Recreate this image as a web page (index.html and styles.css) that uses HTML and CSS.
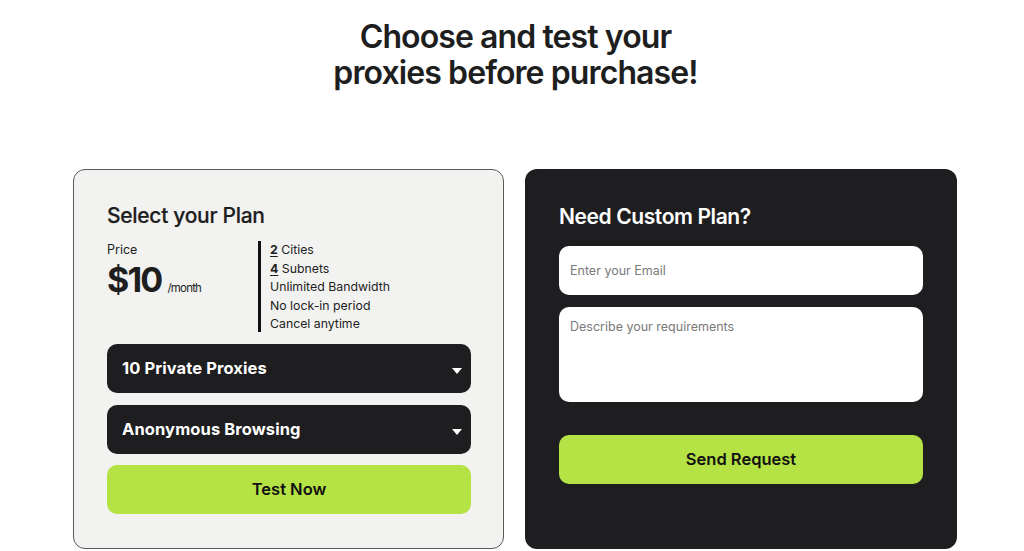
FILE: index.html
```html
<!DOCTYPE html>
<html>
<head>
<meta charset="utf-8">
<link rel="stylesheet" href="styles.css">
</head>
<body>
<h1 class="headline">Choose and test your<br>proxies before purchase!</h1>
<div class="cards">
  <section class="card card-light">
    <h2 class="card-title">Select your Plan</h2>
    <div class="plan-info">
      <div class="price-block">
        <div class="price-label">Price</div>
        <div class="price-row"><span class="price">$10</span><span class="per">/month</span></div>
      </div>
      <ul class="features">
        <li><u class="num">2</u> Cities</li>
        <li><u class="num">4</u> Subnets</li>
        <li>Unlimited Bandwidth</li>
        <li>No lock-in period</li>
        <li>Cancel anytime</li>
      </ul>
    </div>
    <div class="select"><span>10 Private Proxies</span><span class="caret"></span></div>
    <div class="select"><span>Anonymous Browsing</span><span class="caret"></span></div>
    <button class="btn btn-test">Test Now</button>
  </section>
  <section class="card card-dark">
    <h2 class="card-title title-light">Need Custom Plan?</h2>
    <div class="input">Enter your Email</div>
    <div class="input textarea">Describe your requirements</div>
    <button class="btn btn-send">Send Request</button>
  </section>
</div>
</body>
</html>
```
FILE: styles.css
```css
* { box-sizing: border-box; }
html, body { margin: 0; padding: 0; background: #ffffff; }
body {
  font-family: Inter, "Noto Sans", sans-serif;
  color: #1e1e1e;
  width: 1024px;
  height: 551px;
  overflow: hidden;
}
.headline {
  margin: 19px 0 0;
  padding-left: 7px;
  text-align: center;
  font-size: 32px;
  line-height: 36px;
  font-weight: 600;
  letter-spacing: -0.9px;
  color: #1e1e1e;
}
.cards {
  display: flex;
  gap: 21px;
  margin: 78px 0 0 73px;
}
.card {
  width: 432px;
  height: 380px;
  border-radius: 12px;
  padding: 33px 34px 0 34px;
  display: flex;
  flex-direction: column;
}
.card-light {
  width: 431px;
  background: #f2f2f0;
  border: 1px solid #5a5a5a;
  padding: 32px 32px 0 33px;
}
.card-dark {
  background: #1e1e20;
  padding-top: 34px;
}
.card-title {
  margin: 0;
  font-size: 21px;
  line-height: 28px;
  font-weight: 500;
  letter-spacing: -0.3px;
  color: #1e1e1e;
  -webkit-text-stroke: 0.2px #1e1e1e;
}
.title-light {
  color: #ffffff;
  font-weight: 600;
  letter-spacing: -0.4px;
  -webkit-text-stroke: 0;
}
.plan-info {
  display: flex;
  margin-top: 11px;
  height: 91px;
}
.price-block {
  width: 151px;
  padding-top: 1px;
}
.price-label {
  font-size: 12.5px;
  line-height: 16px;
}
.price-row {
  display: flex;
  align-items: baseline;
  margin-top: 2px;
}
.price {
  font-size: 34px;
  line-height: 40px;
  font-weight: 700;
  letter-spacing: -1.8px;
}
.per {
  font-size: 11.5px;
  margin-left: 6px;
  letter-spacing: -0.8px;
}
.features {
  list-style: none;
  margin: 0;
  padding: 0 0 0 9px;
  border-left: 3px solid #111;
  font-size: 12.3px;
  line-height: 18.6px;
}
.features li { white-space: nowrap; }
.num { font-weight: 700; text-underline-offset: 2px; }
.select {
  margin-top: 12px;
  height: 49px;
  border-radius: 10px;
  background: #1e1e20;
  color: #fff;
  display: flex;
  align-items: center;
  justify-content: space-between;
  padding: 0 9px 2px 15px;
  font-size: 16.5px;
  font-weight: 700;
  letter-spacing: 0.1px;
}
.caret {
  width: 0;
  height: 0;
  border-left: 5px solid transparent;
  border-right: 5px solid transparent;
  border-top: 6.5px solid #fff;
  margin-top: 6px;
}
.btn {
  border: 0;
  height: 49px;
  border-radius: 10px;
  background: #b5e244;
  color: #111;
  font-family: Inter, "Noto Sans", sans-serif;
  font-size: 16.5px;
  font-weight: 600;
  width: 100%;
  padding: 0 0 2px;
}
.btn-test { margin-top: 11px; }
.input {
  margin-top: 15px;
  height: 49px;
  border-radius: 10px;
  background: #fff;
  color: #7a7a7a;
  font-size: 12.5px;
  padding: 0 11px;
  display: flex;
  align-items: center;
}
.textarea {
  margin-top: 12px;
  height: 95px;
  align-items: flex-start;
  padding-top: 12px;
}
.btn-send { margin-top: 33px; }
```
